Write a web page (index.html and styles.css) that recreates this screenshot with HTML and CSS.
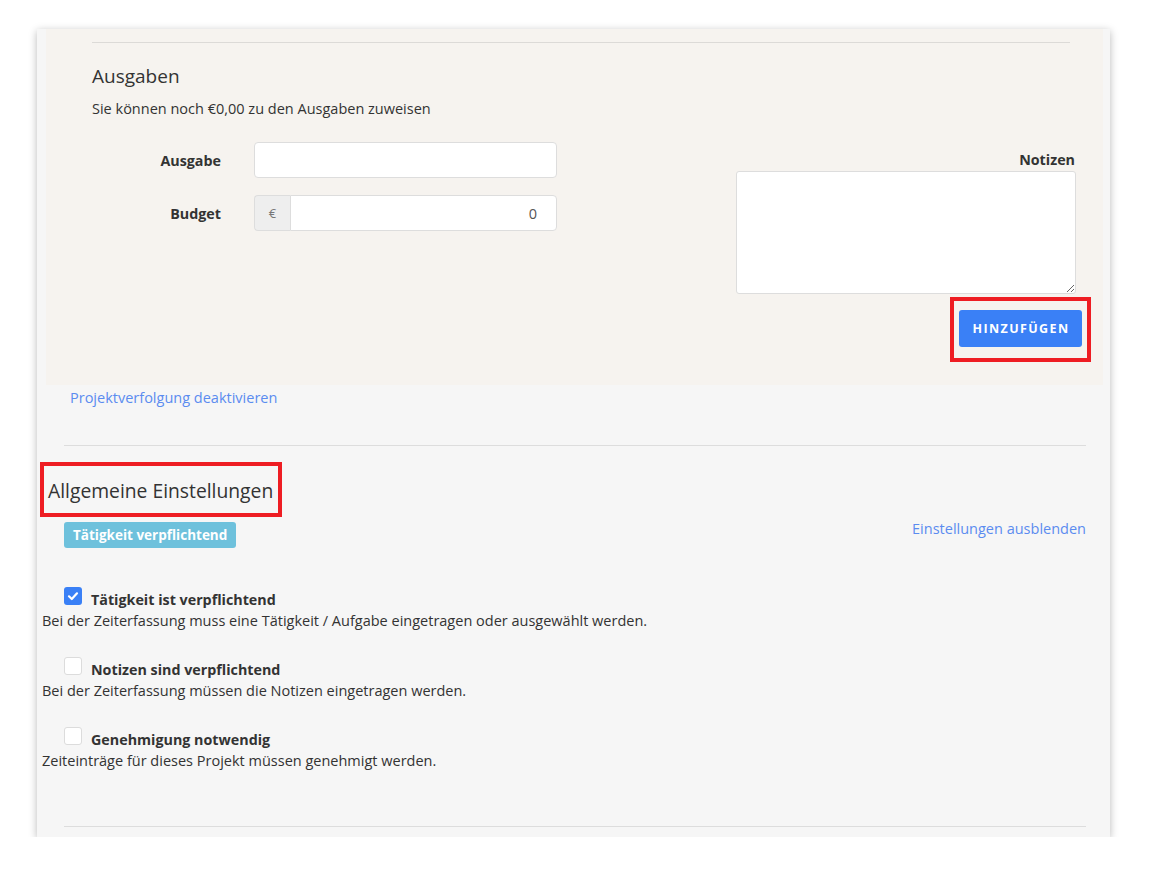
FILE: index.html
```html
<!DOCTYPE html>
<html lang="de">
<head>
<meta charset="utf-8">
<title>Projekt Einstellungen</title>
<link rel="stylesheet" href="styles.css">
</head>
<body>
<div class="frame">
  <section class="expenses">
    <div class="rule-top"></div>
    <h3 class="title">Ausgaben</h3>
    <p class="hint">Sie können noch €0,00 zu den Ausgaben zuweisen</p>
    <div class="form-row">
      <div class="fields">
        <label class="field-label" for="ausgabe">Ausgabe</label>
        <input class="text-input" id="ausgabe" type="text">
        <label class="field-label" for="budget">Budget</label>
        <div class="input-group">
          <span class="addon">€</span>
          <input class="text-input group-input" id="budget" type="text" value="0">
        </div>
      </div>
      <div class="notes">
        <label class="notes-label" for="notizen">Notizen</label>
        <textarea class="notes-area" id="notizen"></textarea>
        <span class="highlight btn-highlight"><button class="btn-primary" type="button">Hinzufügen</button></span>
      </div>
    </div>
  </section>
  <a class="link deactivate" href="#">Projektverfolgung deaktivieren</a>
  <div class="rule rule-mid"></div>
  <h3 class="section-title"><span class="highlight">Allgemeine Einstellungen</span></h3>
  <div class="badge-row">
    <span class="badge">Tätigkeit verpflichtend</span>
    <a class="link" href="#">Einstellungen ausblenden</a>
  </div>
  <div class="option first">
    <div class="option-head">
      <span class="checkbox checked"><svg viewBox="0 0 18 18" width="18" height="18"><path d="M5 9.3 L7.8 12 L13 6.3" fill="none" stroke="#fff" stroke-width="2.2" stroke-linecap="round" stroke-linejoin="round"/></svg></span>
      <span class="option-label">Tätigkeit ist verpflichtend</span>
    </div>
    <p class="option-desc">Bei der Zeiterfassung muss eine Tätigkeit / Aufgabe eingetragen oder ausgewählt werden.</p>
  </div>
  <div class="option">
    <div class="option-head">
      <span class="checkbox"></span>
      <span class="option-label">Notizen sind verpflichtend</span>
    </div>
    <p class="option-desc">Bei der Zeiterfassung müssen die Notizen eingetragen werden.</p>
  </div>
  <div class="option">
    <div class="option-head">
      <span class="checkbox"></span>
      <span class="option-label">Genehmigung notwendig</span>
    </div>
    <p class="option-desc">Zeiteinträge für dieses Projekt müssen genehmigt werden.</p>
  </div>
  <div class="rule rule-bottom"></div>
</div>
</body>
</html>
```
FILE: styles.css
```css
* { box-sizing: border-box; }
html, body {
  margin: 0;
  padding: 0;
  background: #ffffff;
}
body {
  font-family: "Segoe UI", "Open Sans", "Noto Sans", sans-serif;
  font-size: 14.5px;
  color: #333;
}
.frame {
  margin: 29px 0 0 37px;
  width: 1073px;
  height: 808px;
  background: #f6f6f6;
  box-shadow: 0 2px 8px rgba(0, 0, 0, 0.28);
  display: flex;
  flex-direction: column;
}
.expenses {
  margin: 0 7px 0 9px;
  height: 356px;
  background: #f6f3ef;
  padding: 13px 21px 0 46px;
}
.rule-top {
  height: 1px;
  background: #dcdad7;
  margin-right: 12px;
}
.title {
  margin: 19px 0 0;
  font-size: 19px;
  line-height: 28px;
  font-weight: 400;
  color: #333;
}
.hint {
  margin: 9px 0 0;
  line-height: 20px;
}
.form-row {
  display: flex;
  align-items: flex-start;
  margin-top: 23px;
}
.fields {
  display: grid;
  grid-template-columns: 129px 303px;
  column-gap: 33px;
  row-gap: 17px;
  align-items: center;
}
.field-label {
  text-align: right;
  font-weight: 700;
  font-size: 14.3px;
  line-height: 20px;
  padding-top: 1px;
}
.text-input {
  height: 36px;
  width: 100%;
  border: 1px solid #ddd;
  border-radius: 4px;
  background: #fff;
  font: inherit;
  color: #555;
  padding: 0 19px 0 12px;
  outline: none;
}
.input-group {
  display: flex;
  height: 36px;
}
.addon {
  width: 36px;
  height: 36px;
  background: #eeeeee;
  border: 1px solid #ddd;
  border-right: 0;
  border-radius: 4px 0 0 4px;
  color: #777;
  display: flex;
  align-items: center;
  justify-content: center;
  font-size: 13px;
}
.group-input {
  flex: 1;
  border-radius: 0 4px 4px 0;
  text-align: right;
}
.notes {
  margin-left: auto;
  width: 346px;
  display: flex;
  flex-direction: column;
  align-items: flex-end;
  padding-top: 8px;
}
.notes-label {
  font-weight: 700;
  font-size: 14.3px;
  line-height: 20px;
  margin-right: 7px;
}
.notes-area {
  width: 340px;
  height: 123px;
  margin: 1px 6px 0 0;
  border: 1px solid #ddd;
  border-radius: 3px;
  background: #fff;
  resize: vertical;
  font: inherit;
  outline: none;
  display: block;
}
.highlight {
  position: relative;
  display: inline-block;
}
.highlight::after {
  content: "";
  position: absolute;
  border: 4px solid #ee1d23;
  pointer-events: none;
}
.btn-highlight {
  margin-top: 16px;
}
.btn-highlight::after {
  top: -13px;
  left: -9px;
  right: -9px;
  bottom: -15px;
}
.btn-primary {
  display: block;
  width: 123px;
  height: 37px;
  border: 0;
  border-radius: 3px;
  background: #3a80f6;
  color: #fff;
  font-family: inherit;
  font-size: 12.5px;
  font-weight: 700;
  letter-spacing: 1.4px;
  text-transform: uppercase;
  padding: 0 0 0 1px;
}
.link {
  color: #5b8cf0;
  text-decoration: none;
  line-height: 20px;
}
.deactivate {
  align-self: flex-start;
  margin: 3px 0 0 33px;
}
.rule {
  height: 1px;
  background: #dddddd;
  margin: 0 24px 0 27px;
}
.rule-mid {
  margin-top: 37px;
}
.section-title {
  margin: 31px 0 0 11px;
  font-size: 19.3px;
  line-height: 28px;
  font-weight: 400;
  color: #333;
}
.section-title .highlight::after {
  top: -15px;
  left: -8px;
  right: -9px;
  bottom: -12px;
}
.badge-row {
  display: flex;
  justify-content: space-between;
  align-items: flex-start;
  margin: 14px 24px 0 27px;
}
.badge {
  margin-top: 3px;
  height: 26px;
  padding: 0 9px;
  background: #6ec1dc;
  color: #fff;
  font-weight: 700;
  font-size: 13.5px;
  line-height: 26px;
  border-radius: 3px;
}
.option {
  margin-top: 26px;
}
.option.first {
  margin-top: 39px;
}
.option-head {
  display: flex;
  align-items: flex-start;
  margin-left: 27px;
}
.checkbox {
  width: 18px;
  height: 18px;
  border: 1px solid #dcdcdc;
  border-radius: 3px;
  background: #fff;
  display: block;
  flex: none;
}
.checkbox svg {
  display: block;
}
.checkbox.checked {
  border: 0;
  background: #3a80f6;
}
.option-label {
  margin-left: 9px;
  padding-top: 3px;
  font-weight: 700;
  font-size: 14.3px;
  line-height: 20px;
}
.option-desc {
  margin: 1px 0 0 5px;
  line-height: 20px;
}
.rule-bottom {
  margin-top: 55px;
}
```
